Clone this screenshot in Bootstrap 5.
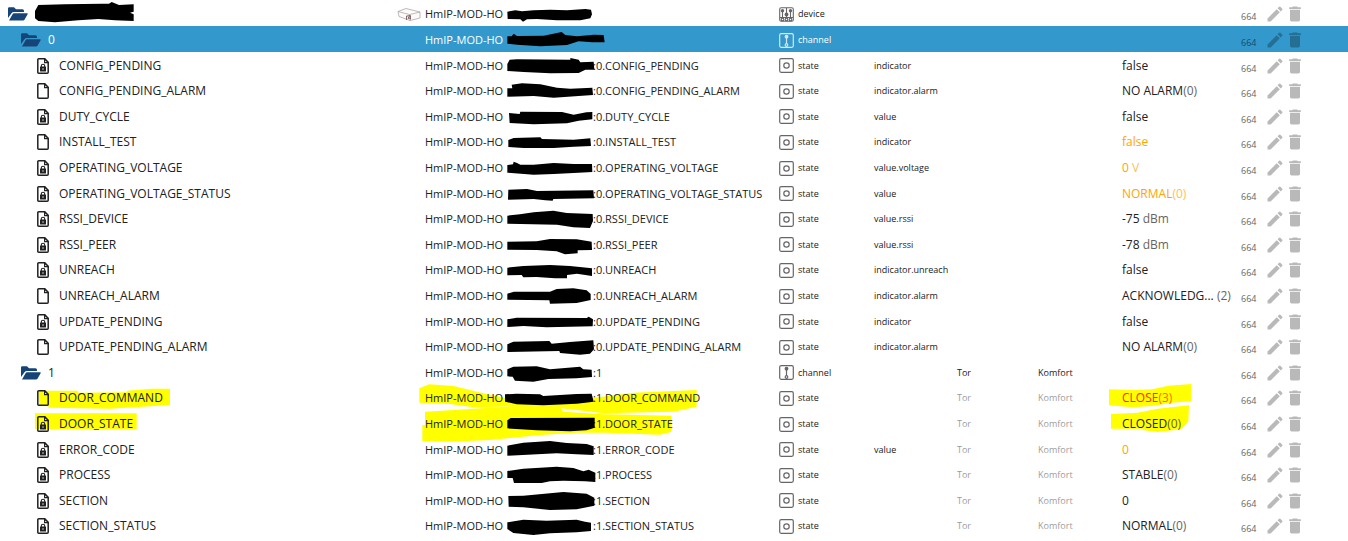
<!DOCTYPE html>
<html lang="de">
<head>
<meta charset="utf-8">
<meta name="viewport" content="width=device-width, initial-scale=1">
<title>Objekte</title>
<link href="https://cdn.jsdelivr.net/npm/bootstrap@5.3.0/dist/css/bootstrap.min.css" rel="stylesheet">
<style>
body{font-family:"Open Sans","Noto Sans",sans-serif;color:#212121;background:#fff}
.tree-wrap{z-index:0;overflow-x:clip}
.tree{table-layout:fixed;min-width:1100px;color:inherit;--bs-table-color:inherit;--bs-table-bg:transparent}
.tree tr{height:26px}
.tree tr:nth-child(5n+3),.tree tr:nth-child(5n){height:25px}
.tree td{padding:2px 0 0;line-height:20px;white-space:nowrap;position:relative;font-size:9px;color:inherit}
.tree svg{display:block;flex:none;overflow:visible}
.tree tr.picked{background:#3399cc;color:#fff}
.c-id{width:382px}.c-type{width:95px}.c-role{width:83px}.c-room{width:81px}.c-func{width:84px}.c-val{width:119px}.c-act{width:107px}
.tree td.name-cell{font-size:12px}
.tree td.id-cell{font-size:11px}
.tree td.val-cell{font-size:12px}
.lvl0{padding-left:8px}.lvl1{padding-left:21px}.lvl2{padding-left:37px}
.lvl0,.lvl1{gap:7px}.lvl2{gap:10px}
.folder{color:#164477}
.thumb{width:28px}
.prefix{width:82px}
.scribble{margin:-2px 0}
.redact{z-index:1}
.kind{gap:4px}
.kind svg{color:#666}
.picked .kind svg{color:#d3e8f4}
.inherit{opacity:.45}
.rest{opacity:.7}
.orange{color:#ffa500}.red{color:#ff2a00}
.acl{width:24px;font-size:9px;line-height:16px;color:#666;padding-top:6px}
.picked .acl{color:#144a6b}
.tool{color:#000;opacity:.27;border:0;background:none;padding:0;width:20px}
.marker{position:absolute;left:0;top:0;z-index:-1;fill:#ff0}
.id-cell .marker{left:28px}
</style>
</head>
<body>
<svg class="d-none" aria-hidden="true">
<symbol id="folder" viewBox="0 0 20 14"><path fill="currentColor" d="M0 11V1.600Q0 .3 1.300 .3H6L8 2.300H14.500Q16 2.300 16 4V5H6Q4.300 5 3.500 6.200ZM1 13.500 4.700 7Q5.100 6.200 6 6.200H19Q20.200 6.300 19.600 7.300L16.500 12.700Q16 13.500 15 13.500Z"/></symbol>
<symbol id="file" viewBox="0 0 12 16"><path fill="none" stroke="currentColor" stroke-width="1.500" d="M1.800 .8H7.800L11.200 4.200V14.200Q11.200 15.200 10.200 15.200H1.800Q.8 15.200 .8 14.200V1.800Q.8 .8 1.800 .8Z"/><path fill="currentColor" d="M7 .8H8L11.500 4.300V5.300H7Z"/><path fill="#fff" d="M8.200 2.500V4.100H9.800Z"/></symbol>
<symbol id="locked" viewBox="0 0 12 16"><use href="#file"/><rect x="3" y="8.500" width="6" height="5" rx=".6" fill="currentColor"/><path fill="none" stroke="currentColor" stroke-width="1.100" d="M4.300 9V7.700Q4.300 6.300 6 6.300T7.700 7.700V9"/><circle cx="6" cy="11" r=".7" fill="#fff"/></symbol>
<symbol id="state" viewBox="0 0 15 15"><g fill="none" stroke="currentColor" stroke-width="1.200"><rect x=".7" y=".7" width="13.600" height="13.600" rx="1.500"/><circle cx="7.500" cy="7.500" r="2.700"/></g></symbol>
<symbol id="channel" viewBox="0 0 15 15"><g fill="none" stroke="currentColor" stroke-width="1.200"><rect x=".7" y=".7" width="13.600" height="13.600" rx="1.500"/><path d="M7.500 4V10.500"/><circle cx="7.500" cy="12" r="1.300"/></g><circle cx="7.500" cy="3.700" r="1.900" fill="currentColor"/></symbol>
<symbol id="device" viewBox="0 0 15 15"><g fill="none" stroke="currentColor" stroke-width="1.100"><rect x=".7" y=".7" width="13.600" height="13.600" rx="1.500"/><path d="M3.500 4V10M7.500 1V10M11.500 4V10M1 10.500H14"/><circle cx="3.500" cy="12.400" r="1.300"/><circle cx="7.500" cy="12.400" r="1.300"/><circle cx="11.500" cy="12.400" r="1.300"/></g><g fill="currentColor"><circle cx="3.500" cy="3.700" r="1.700"/><circle cx="7.500" cy="7.500" r="1.900"/><circle cx="11.500" cy="3.700" r="1.700"/></g></symbol>
<symbol id="box" viewBox="0 0 23 13"><path fill="#fcfafa" stroke="#a89a9a" stroke-width=".7" d="M.5 3.500 8.500 .5 22.500 4V10L12.500 12.500 1.500 8.500ZM.5 3.500 12 6.500 22.500 4M12 6.500 12.500 12.500"/><path fill="none" stroke="#7a5f5f" stroke-width=".9" d="M9 12V8L13 7.500V11.500M10.500 8.500 12 11M12 8 10.500 11"/></symbol>
<symbol id="pencil" viewBox="0 0 24 24"><path fill="currentColor" d="M3 17.250V21h3.750L17.810 9.940l-3.750-3.750L3 17.250zM20.710 7.040a1 1 0 0 0 0-1.410l-2.340-2.340a1 1 0 0 0-1.410 0l-1.830 1.830 3.750 3.750 1.830-1.830z"/></symbol>
<symbol id="trash" viewBox="0 0 24 24"><path fill="currentColor" d="M6 19c0 1.100.9 2 2 2h8c1.100 0 2-.9 2-2V7H6v12zM19 4h-3.500l-1-1h-5l-1 1H5v2h14V4z"/></symbol>
</svg>
<main class="tree-wrap position-relative">
<table class="tree table table-borderless align-middle w-100 mb-0">
<colgroup><col><col class="c-id"><col class="c-type"><col class="c-role"><col class="c-room"><col class="c-func"><col class="c-val"><col class="c-act"></colgroup>
<tbody id="rows"></tbody>
</table>
</main>
<script>
// name, suffix, role, value, value suffix, value colour, writable, redaction outline (three units per pixel)
const data = [
 {kind:"device", ink:"M1,32 L25,28 45,31 80,28 130,26 180,28 235,24 252,26 255,40 250,52 220,58 150,58 90,54 60,55 48,62 40,55 2,54z"},
 {kind:"channel", name:"0", picked:true, ink:"M1,28 L14,28 20,20 30,27 110,26 164,15 175,24 210,28 260,23 290,24 293,46 255,46 215,43 180,54 100,58 30,53 1,50z"},
 {name:"CONFIG_PENDING", role:"indicator", val:"false", ink:"M1,33 L8,20 30,19 190,20 190,15 215,20 220,28 260,26 262,50 235,50 215,60 130,61 50,57 1,54z"},
 {name:"CONFIG_PENDING_ALARM", role:"indicator.alarm", val:"NO ALARM", num:"(0)", open:true, ink:"M1,31 L16,31 14,20 45,16 100,19 150,29 190,32 256,29 258,51 215,54 140,59 80,54 1,56z"},
 {name:"DUTY_CYCLE", role:"value", val:"false", ink:"M6,27 L38,30 40,23 165,24 200,32 238,25 256,24 256,46 215,50 180,58 80,61 8,57z"},
 {name:"INSTALL_TEST", role:"indicator", val:"false", tone:"orange", open:true, ink:"M4,33 L20,27 100,25 105,30 200,32 250,28 252,51 200,53 140,57 50,57 4,54z"},
 {name:"OPERATING_VOLTAGE", role:"value.voltage", val:"0", num:" V", tone:"orange", ink:"M1,30 L18,28 20,20 30,24 40,29 80,29 140,24 200,27 255,27 256,51 200,54 140,57 80,59 1,53z"},
 {name:"OPERATING_VOLTAGE_STATUS", role:"value", val:"NORMAL", num:"(0)", tone:"orange", ink:"M4,26 L60,24 90,30 259,28 261,52 139,54 137,59 115,58 80,54 3,56z"},
 {name:"RSSI_DEVICE", role:"value.rssi", val:"-75", num:" dBm", ink:"M1,29 L39,25 80,19 139,14 179,21 257,24 258,45 249,66 199,64 150,56 1,53z"},
 {name:"RSSI_PEER", role:"value.rssi", val:"-78", num:" dBm", ink:"M1,29 L89,28 129,21 209,22 254,29 255,54 212,55 212,64 174,67 149,58 89,54 1,53z"},
 {name:"UNREACH", role:"indicator.unreach", val:"false", ink:"M1,32 L49,27 129,24 189,27 255,34 255,57 210,50 180,54 180,64 144,64 89,60 49,61 44,54 1,55z"},
 {name:"UNREACH_ALARM", role:"indicator.alarm", val:"ACKNOWLEDG...", num:" (2)", open:true, ink:"M1,32 L21,26 129,26 149,18 199,16 239,22 251,33 251,51 209,60 129,62 127,52 1,50z"},
 {name:"UPDATE_PENDING", role:"indicator", val:"false", ink:"M1,31 L29,26 239,27 245,23 258,31 257,52 119,55 49,51 1,54z"},
 {name:"UPDATE_PENDING_ALARM", role:"indicator.alarm", val:"NO ALARM", num:"(0)", open:true, ink:"M1,31 L19,23 127,21 134,29 189,24 259,19 261,46 249,59 219,62 159,57 157,51 1,54z"},
 {kind:"channel", name:"1", suffix:":1", ink:"M1,28 L19,20 89,19 129,28 219,20 229,28 254,29 255,51 209,55 124,57 79,65 24,62 17,50 1,49z"},
 {name:"DOOR_COMMAND", val:"CLOSE", num:"(3)", tone:"red", open:true, ink:"M-6,28 L29,26 99,28 109,33 209,27 254,26 260,50 209,56 109,61 29,58 -6,50z",
  marks:["M115,20H233L235,26 380,25 382,20 455,14 510,14V63L330,74 145,71V66H118z","M-17,13 L13,1 85,6 175,28 245,43 495,43 625,26 815,18V68L745,83 535,88 455,78 345,66 145,70 75,60 -17,56z","M-39,16 L40,18 90,16 140,5 207,0V52L150,56 90,66 30,70 -39,64z"]},
 {name:"DOOR_STATE", val:"CLOSED", num:"(0)", ink:"M1,28 L11,21 263,20 263,50 239,58 189,61 89,58 1,52z",
  marks:["M105,10H410V57H105z","M0,5 L195,-7 325,-15 405,-10 415,5 535,13 740,17V65L705,74 545,68 455,68 345,75 195,90 75,95 -8,93V45H0z","M-33,12 L47,8 107,-4 201,-14 199,35 177,58 107,66 62,60V56H-33z"]},
 {name:"ERROR_CODE", role:"value", val:"0", tone:"orange", ink:"M1,26 L49,17 129,12 179,18 239,21 260,28 260,54 209,52 149,49 1,56z"},
 {name:"PROCESS", val:"STABLE", num:"(0)", ink:"M1,27 L49,20 149,14 199,18 229,28 245,23 265,32 265,60 234,58 169,56 129,58 104,63 21,63 17,48 1,48z"},
 {name:"SECTION", val:"0", ink:"M4,24 L49,23 169,12 239,17 262,29 262,53 209,64 129,66 49,58 5,56z"},
 {name:"SECTION_STATUS", val:"NORMAL", num:"(0)", ink:"M1,28 L49,20 119,23 209,20 234,26 252,29 252,54 209,58 129,61 79,66 19,60 1,48z"}
];
const icon = (id, w, h, cls = "") => `<svg class="${cls}" width="${w}" height="${h}" aria-hidden="true"><use href="#${id}"/></svg>`;
const outline = (d, w, cls) => `<svg class="${cls}" width="${w}" height="26" viewBox="0 0 ${w * 3} 78" aria-hidden="true"><path stroke-linejoin="round" d="${d}"/></svg>`;
document.getElementById("rows").innerHTML = data.map((r, i) => {
  const kind = r.kind || "state", level = kind === "device" ? 0 : kind === "channel" ? 1 : 2;
  const mark = n => r.marks ? outline(r.marks[n], 100, "marker") : "";
  const suffix = kind === "state" ? `:${i < 14 ? 0 : 1}.${r.name}` : r.suffix || "";
  const label = r.name || outline("M0,30 L10,12 90,10 200,8 222,8 230,3 252,12 296,10 296,32 285,35 296,40 296,60 240,58 190,54 130,58 60,64 10,60 0,52z", 99, "scribble");
  const group = t => i < 14 ? "" : `<span class="${kind === "state" ? "inherit" : ""}">${t}</span>`;
  const value = r.val ? `<span>${r.val}</span><span class="rest" style="white-space:pre">${r.num || ""}</span>` : "";
  return `<tr class="${r.picked ? "picked" : ""}">
<td class="name-cell">${mark(0)}<div class="d-flex align-items-center lvl${level}">${level < 2 ? icon("folder", 20, 14, "folder") : icon(r.open ? "file" : "locked", 12, 16)}<span>${label}</span></div></td>
<td class="id-cell">${mark(1)}<div class="d-flex align-items-center"><span class="thumb">${level ? "" : icon("box", 24, 13)}</span><span class="prefix">HmIP-MOD-HO</span>${outline(r.ink, 86, "scribble redact position-relative")}<span>${suffix}</span></div></td>
<td><div class="kind d-flex align-items-center">${icon(kind, 15, 15)}<span>${kind}</span></div></td>
<td>${r.role || ""}</td><td>${group("Tor")}</td><td>${group("Komfort")}</td>
<td class="val-cell">${mark(2)}<div class="d-flex ${r.tone || ""}">${value}</div></td>
<td><div class="d-flex align-items-center"><span class="acl">664</span><button type="button" class="tool" aria-label="Bearbeiten">${icon("pencil", 20, 20)}</button><button type="button" class="tool" aria-label="Löschen">${icon("trash", 20, 20)}</button></div></td>
</tr>`;
}).join("");
</script>
<script src="https://cdn.jsdelivr.net/npm/bootstrap@5.3.0/dist/js/bootstrap.bundle.min.js"></script>
</body>
</html>
